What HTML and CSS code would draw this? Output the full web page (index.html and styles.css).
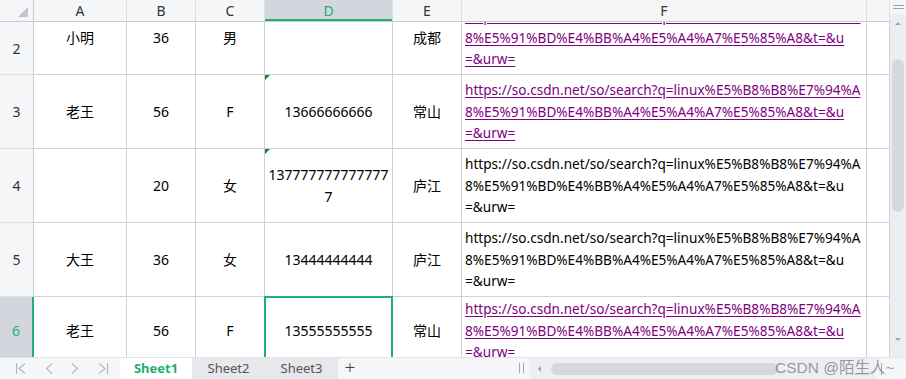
FILE: index.html
```html
<!DOCTYPE html>
<html lang="zh-CN">
<head>
  <meta charset="UTF-8">
  <meta name="viewport" content="width=device-width, initial-scale=1.0">
  <title>Sheet1</title>
  <link rel="stylesheet" href="styles.css">
</head>
<body>

  <div class="app">
    <div class="main">
      <div class="sheet">
        <!-- column headers -->
        <div class="heads">
          <div class="corner"><span class="corner-mark"></span></div>
          <div class="head">A</div>
          <div class="head">B</div>
          <div class="head">C</div>
          <div class="head selected">D</div>
          <div class="head">E</div>
          <div class="head">F</div>
          <div class="head"></div>
        </div>

        <div class="rows">
          <div class="row">
            <div class="rowhead first">2</div>
            <div class="cell">小明</div>
            <div class="cell">36</div>
            <div class="cell">男</div>
            <div class="cell"></div>
            <div class="cell">成都</div>
            <div class="cell url"><a href="#">https://so.csdn.net/so/search?q=linux%E5%B8%B8%E7%94%A<br>8%E5%91%BD%E4%BB%A4%E5%A4%A7%E5%85%A8&amp;t=&amp;u<br>=&amp;urw=</a></div>
            <div class="cell"></div>
          </div>

          <div class="row">
            <div class="rowhead">3</div>
            <div class="cell">老王</div>
            <div class="cell">56</div>
            <div class="cell">F</div>
            <div class="cell text-num">13666666666</div>
            <div class="cell">常山</div>
            <div class="cell url"><a href="#">https://so.csdn.net/so/search?q=linux%E5%B8%B8%E7%94%A<br>8%E5%91%BD%E4%BB%A4%E5%A4%A7%E5%85%A8&amp;t=&amp;u<br>=&amp;urw=</a></div>
            <div class="cell"></div>
          </div>

          <div class="row">
            <div class="rowhead">4</div>
            <div class="cell"></div>
            <div class="cell">20</div>
            <div class="cell">女</div>
            <div class="cell text-num">137777777777777<br>7</div>
            <div class="cell">庐江</div>
            <div class="cell url">https://so.csdn.net/so/search?q=linux%E5%B8%B8%E7%94%A<br>8%E5%91%BD%E4%BB%A4%E5%A4%A7%E5%85%A8&amp;t=&amp;u<br>=&amp;urw=</div>
            <div class="cell"></div>
          </div>

          <div class="row">
            <div class="rowhead">5</div>
            <div class="cell">大王</div>
            <div class="cell">36</div>
            <div class="cell">女</div>
            <div class="cell">13444444444</div>
            <div class="cell">庐江</div>
            <div class="cell url">https://so.csdn.net/so/search?q=linux%E5%B8%B8%E7%94%A<br>8%E5%91%BD%E4%BB%A4%E5%A4%A7%E5%85%A8&amp;t=&amp;u<br>=&amp;urw=</div>
            <div class="cell"></div>
          </div>

          <div class="row last">
            <div class="rowhead selected">6</div>
            <div class="cell">老王</div>
            <div class="cell">56</div>
            <div class="cell">F</div>
            <div class="cell active">13555555555</div>
            <div class="cell">常山</div>
            <div class="cell url"><a href="#">https://so.csdn.net/so/search?q=linux%E5%B8%B8%E7%94%A<br>8%E5%91%BD%E4%BB%A4%E5%A4%A7%E5%85%A8&amp;t=&amp;u<br>=&amp;urw=</a></div>
            <div class="cell"></div>
          </div>
        </div>
      </div>

      <!-- vertical scrollbar -->
      <div class="vscroll">
        <div class="vscroll-top"><span></span><span></span></div>
        <div class="vtrack">
          <span class="arrow up"></span>
          <div class="vthumb"></div>
          <span class="arrow down"></span>
        </div>
      </div>
    </div>

    <!-- sheet tabs -->
    <div class="tabbar">
      <div class="nav">
        <svg width="12" height="13" viewBox="0 0 12 13"><path d="M1.5 1v11M10 1.5L4 6.5l6 5" fill="none" stroke="#b4b7bd" stroke-width="1.2"/></svg>
        <svg width="8" height="13" viewBox="0 0 8 13"><path d="M7 1.5L1.5 6.5 7 11.5" fill="none" stroke="#b4b7bd" stroke-width="1.2"/></svg>
        <svg width="8" height="13" viewBox="0 0 8 13"><path d="M1 1.5l5.5 5L1 11.5" fill="none" stroke="#b4b7bd" stroke-width="1.2"/></svg>
        <svg width="12" height="13" viewBox="0 0 12 13"><path d="M2 1.5l6 5-6 5M10.5 1v11" fill="none" stroke="#b4b7bd" stroke-width="1.2"/></svg>
      </div>
      <div class="tab current">Sheet1</div>
      <div class="tab">Sheet2</div>
      <div class="tab">Sheet3</div>
      <div class="add">+</div>
      <div class="spacer"></div>
      <div class="split"></div>
      <div class="htrack">
        <span class="arrow left"></span>
        <div class="hthumb"></div>
      </div>
      <div class="grip"></div>
      <div class="watermark">CSDN @陌生人~</div>
    </div>
  </div>

</body>
</html>
```

FILE: styles.css
```css
/* Basic Styles */
body {
  margin: 0;
  width: 906px;
  height: 379px;
  overflow: hidden;
  background-color: #ffffff;
  font-family: "Noto Sans", "Noto Sans CJK SC", sans-serif;
  font-size: 14px;
  color: #000;
}

.app {
  display: flex;
  flex-direction: column;
  height: 379px;
}

.main {
  display: flex;
  height: 357px;
}

/* Grid */
.sheet {
  flex: 1;
  overflow: hidden;
}

.heads,
.row {
  display: grid;
  grid-template-columns: 34px 93px 69px 69px 128px 69px 405px 23px;
}

.heads {
  position: relative;
  z-index: 2;
  height: 21px;
  background-color: #f5f6f8;
  border-bottom: 1px solid #c6cad4;
}

.head,
.corner {
  box-sizing: border-box;
  border-right: 1px solid #dcdfe5;
  text-align: center;
  line-height: 21px;
  color: #333;
}

.corner {
  position: relative;
  border-right-color: #c6cad4;
}

.corner-mark {
  position: absolute;
  right: 5px;
  bottom: 4px;
  width: 0;
  height: 0;
  border-left: 10px solid transparent;
  border-bottom: 10px solid #c2c4c9;
}

.head.selected {
  background-color: #d3d6dd;
  color: #1fae70;
  box-shadow: inset 0 -2px 0 #22b073;
}

.rows {
  margin-top: -21px;
}

.row {
  height: 74px;
}

.row.last {
  height: 68px;
}

.rowhead {
  box-sizing: border-box;
  display: flex;
  align-items: center;
  justify-content: center;
  background-color: #f5f6f8;
  border-right: 1px solid #c6cad4;
  border-bottom: 1px solid #dcdfe5;
  color: #333;
}

.rowhead.first {
  padding-top: 21px;
}

.rowhead.selected {
  background-color: #d3d6dd;
  color: #1fae70;
  border-right: 2px solid #22b073;
}

.cell {
  position: relative;
  box-sizing: border-box;
  display: flex;
  align-items: center;
  justify-content: center;
  text-align: center;
  border-right: 1px solid #cdd1db;
  border-bottom: 1px solid #cdd1db;
  line-height: 21.5px;
  white-space: nowrap;
}

.cell.url {
  justify-content: flex-start;
  text-align: left;
  padding-left: 3px;
  font-size: 13.6px;
}

.cell a {
  color: #800080;
  text-decoration: underline;
  text-underline-offset: 2px;
}

/* number stored as text */
.cell.text-num::before {
  content: "";
  position: absolute;
  left: 0;
  top: 0;
  border-top: 5px solid #138a13;
  border-right: 5px solid transparent;
}

.cell.active::after {
  content: "";
  position: absolute;
  left: -1px;
  top: -1px;
  right: -1px;
  bottom: -1px;
  border: 2px solid #22b073;
}

/* Vertical scrollbar */
.vscroll {
  width: 16px;
  display: flex;
  flex-direction: column;
  background-color: #f5f6f8;
}

.vscroll-top {
  height: 14px;
  display: flex;
  flex-direction: column;
  align-items: center;
  gap: 2px;
  padding-top: 5px;
  box-sizing: border-box;
}

.vscroll-top span {
  width: 11px;
  height: 1px;
  background-color: #9ea1a8;
}

.vtrack {
  flex: 1;
  display: flex;
  flex-direction: column;
  align-items: center;
  background-color: #eceef1;
  padding-top: 8px;
}

.vthumb {
  width: 12px;
  height: 153px;
  margin-top: 34px;
  background-color: #d6d8de;
  border-radius: 6px;
}

.arrow {
  width: 0;
  height: 0;
}

.arrow.up {
  border-left: 3px solid transparent;
  border-right: 3px solid transparent;
  border-bottom: 3px solid #a2a5ab;
}

.arrow.down {
  margin-top: auto;
  margin-bottom: 16px;
  border-left: 3px solid transparent;
  border-right: 3px solid transparent;
  border-top: 3px solid #a2a5ab;
}

/* Tab bar */
.tabbar {
  position: relative;
  display: flex;
  height: 22px;
  box-sizing: border-box;
  border-top: 1px solid #e1e3e8;
  background-color: #f5f6f8;
}

.nav {
  width: 120px;
  display: flex;
  align-items: center;
  gap: 18px;
  padding-left: 15px;
  box-sizing: border-box;
}

.tab {
  width: 73px;
  text-align: center;
  line-height: 21px;
  font-size: 13px;
  color: #555;
  background-color: #e7e8ec;
}

.tab.current {
  width: 72px;
  background-color: #ffffff;
  color: #1fae70;
  font-weight: bold;
}

.add {
  width: 24px;
  text-align: center;
  line-height: 19px;
  font-size: 19px;
  font-weight: 300;
  color: #3a3d44;
}

.spacer {
  flex: 1;
}

.split {
  width: 3px;
  height: 10px;
  margin: 5px 6px 0 0;
  border-left: 1px solid #a5a8ae;
  border-right: 1px solid #a5a8ae;
}

.htrack {
  width: 345px;
  display: flex;
  align-items: center;
  background-color: #eceef1;
  padding-left: 8px;
  box-sizing: border-box;
}

.arrow.left {
  border-top: 3px solid transparent;
  border-bottom: 3px solid transparent;
  border-right: 3px solid #a2a5ab;
}

.hthumb {
  width: 227px;
  height: 12px;
  margin-left: 10px;
  background-color: #d6d8de;
  border-radius: 6px;
}

.grip {
  width: 1px;
  height: 12px;
  margin: 5px 24px 0 6px;
  background-color: #a5a8ae;
}

.watermark {
  position: absolute;
  left: 775px;
  top: 0;
  font-family: "Liberation Sans", "Noto Sans CJK SC", sans-serif;
  font-size: 15.5px;
  line-height: 20px;
  color: rgba(110, 112, 118, 0.7);
}
```
